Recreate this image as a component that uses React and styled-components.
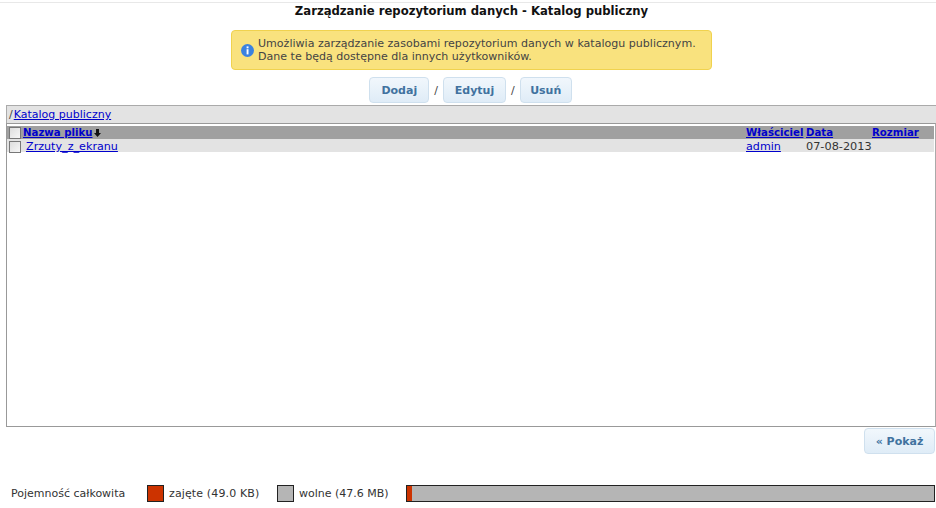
import React from 'react';
import styled, { createGlobalStyle } from 'styled-components';

const GlobalStyle = createGlobalStyle`
  html, body { margin: 0; padding: 0; background: #fff; }
  body { font-family: "DejaVu Sans", Verdana, sans-serif; font-size: 11px; color: #222; }
`;

const Page = styled.div`
  width: 936px;
  height: 508px;
  overflow: hidden;
  display: flex;
  flex-direction: column;
  padding-top: 2px;
  box-sizing: border-box;
`;

const TopRule = styled.div`
  height: 1px;
  background: #e8e8e8;
`;

const Title = styled.h1`
  margin: 0 0 0 7px;
  height: 27px;
  padding-top: 1px;
  box-sizing: border-box;
  font-size: 11.65px;
  line-height: 14px;
  font-weight: bold;
  color: #111;
  text-align: center;
`;

const Notice = styled.div`
  align-self: flex-start;
  margin-left: 231px;
  width: 481px;
  height: 40px;
  box-sizing: border-box;
  display: flex;
  align-items: center;
  gap: 4px;
  padding: 1px 9px 0;
  background: #f9e27e;
  border: 1px solid #f0d24e;
  border-radius: 4px;
  font-size: 11.05px;
  line-height: 12.5px;
  color: #444;
`;

const NoticeIcon = styled.svg`
  width: 13px;
  height: 13px;
  flex: none;
`;

const Actions = styled.div`
  display: flex;
  justify-content: center;
  align-items: center;
  gap: 5px;
  height: 26px;
  margin-top: 7px;
  margin-left: 5px;
  color: #444;
`;

const ActionButton = styled.button`
  width: ${(p) => p.$w}px;
  height: 26px;
  padding: 0;
  font-family: inherit;
  font-size: 11px;
  font-weight: bold;
  color: #41729f;
  background: linear-gradient(#f1f7fc, #dfecf7);
  border: 1px solid #cfe0ee;
  border-radius: 4px;
`;

const Crumbs = styled.div`
  margin: 2px 0 0 6px;
  height: 18px;
  box-sizing: border-box;
  background: #e3e3e3;
  border: 1px solid #aaa;
  border-bottom: 0;
  border-right: 0;
  padding: 2px 0 0 2px;
  line-height: 14px;
  font-size: 11px;
  color: #444;
`;

const CrumbLink = styled.a`
  margin-left: 1px;
  color: #0000cc;
  text-decoration: underline;
`;

const FileLink = styled.a`
  color: #0000cc;
  text-decoration: underline;
  font-weight: ${(p) => (p.$bold ? 'bold' : 'normal')};
  font-size: ${(p) => (p.$bold ? '10.2px' : 'inherit')};
`;

const Panel = styled.div`
  margin-left: 6px;
  height: 304px;
  box-sizing: border-box;
  border: 1px solid #999;
  border-right: 1px solid #aaa;
  padding: 2px 1px 0 0;
`;

const Row = styled.div`
  display: grid;
  grid-template-columns: 739px 60px 66px 1fr;
  height: 13px;
  line-height: ${(p) => (p.$head ? 13 : 15)}px;
  font-size: 11.15px;
  background: ${(p) => (p.$head ? '#a0a0a0' : '#e3e3e3')};
`;

const NameCell = styled.div`
  display: flex;
  align-items: center;
  white-space: nowrap;
`;

const Check = styled.input.attrs({ type: 'checkbox' })`
  appearance: none;
  margin: 0 ${(p) => p.$gap}px 0 2px;
  width: 12px;
  height: 12px;
  box-sizing: border-box;
  background: linear-gradient(135deg, #ddd, #f6f6f6);
  border: 1px solid #777;
  flex: none;
`;

const SortArrow = styled.svg`
  width: 7px;
  height: 8px;
  margin-left: 2px;
`;

const Cell = styled.div`
  white-space: nowrap;
  color: #333;
`;

const DateCell = styled(Cell)`
  font-size: 11.3px;
`;

const ShowRow = styled.div`
  display: flex;
  justify-content: flex-end;
  padding-right: 1px;
  margin-top: 1px;
`;

const Footer = styled.div`
  display: flex;
  align-items: center;
  height: 18px;
  margin-top: 30px;
  padding-left: 11px;
  font-size: 11px;
  color: #333;
`;

const LegendLabel = styled.span`
  width: ${(p) => p.$w}px;
  flex: none;
  white-space: nowrap;
  letter-spacing: ${(p) => p.$track || 0}px;
`;

const Swatch = styled.span`
  width: 15px;
  height: 15px;
  flex: none;
  margin-right: 5px;
  border: 1px solid #222;
  background: ${(p) => p.$color};
`;

const Gauge = styled.div`
  width: 527px;
  height: 15px;
  flex: none;
  display: flex;
  border: 1px solid #222;
  background: #b5b5b5;
`;

const GaugeUsed = styled.div`
  background: #cc3300;
`;

const InfoIcon = () => (
  <NoticeIcon viewBox="0 0 13 13">
    <circle cx="6.5" cy="6.5" r="6.5" fill="#3b82e0" />
    <rect x="5.6" y="2.4" width="1.9" height="1.9" fill="#fff" />
    <rect x="5.6" y="5.2" width="1.9" height="5.2" fill="#fff" />
  </NoticeIcon>
);

export default function App() {
  return (
    <Page>
      <GlobalStyle />
      <TopRule />
      <Title>Zarządzanie repozytorium danych - Katalog publiczny</Title>
      <Notice>
        <InfoIcon />
        <div>
          Umożliwia zarządzanie zasobami repozytorium danych w katalogu publicznym.
          <br />
          Dane te będą dostępne dla innych użytkowników.
        </div>
      </Notice>
      <Actions>
        <ActionButton $w={60}>Dodaj</ActionButton>/<ActionButton $w={63}>Edytuj</ActionButton>/
        <ActionButton $w={52}>Usuń</ActionButton>
      </Actions>
      <Crumbs>
        /<CrumbLink href="#">Katalog publiczny</CrumbLink>
      </Crumbs>
      <Panel>
        <Row $head>
          <NameCell>
            <Check $gap={2} />
            <FileLink href="#" $bold>Nazwa pliku</FileLink>
            <SortArrow viewBox="0 0 7 8">
              <path d="M2 0h3v4h2L3.5 8 0 4h2z" fill="#111" />
            </SortArrow>
          </NameCell>
          <Cell><FileLink href="#" $bold>Właściciel</FileLink></Cell>
          <Cell><FileLink href="#" $bold>Data</FileLink></Cell>
          <Cell><FileLink href="#" $bold>Rozmiar</FileLink></Cell>
        </Row>
        <Row>
          <NameCell>
            <Check $gap={5} />
            <FileLink href="#">Zrzuty_z_ekranu</FileLink>
          </NameCell>
          <Cell><FileLink href="#">admin</FileLink></Cell>
          <DateCell>07-08-2013</DateCell>
          <Cell />
        </Row>
      </Panel>
      <ShowRow>
        <ActionButton $w={71}>« Pokaż</ActionButton>
      </ShowRow>
      <Footer>
        <LegendLabel $w={136}>Pojemność całkowita</LegendLabel>
        <Swatch $color="#cc3300" />
        <LegendLabel $w={108} $track={0.13}>zajęte (49.0 KB)</LegendLabel>
        <Swatch $color="#b5b5b5" />
        <LegendLabel $w={107}>wolne (47.6 MB)</LegendLabel>
        <Gauge>
          <GaugeUsed style={{ width: '1%' }} />
        </Gauge>
      </Footer>
    </Page>
  );
}
